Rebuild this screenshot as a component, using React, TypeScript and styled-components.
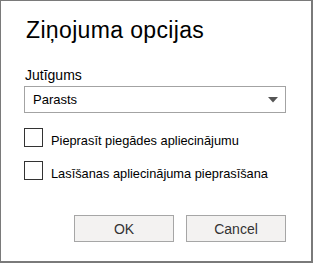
import React from "react";
import styled, { createGlobalStyle } from "styled-components";

const Global = createGlobalStyle`
  html, body { margin: 0; padding: 0; background: #ffffff; }
  * { box-sizing: border-box; }
`;

const Dialog = styled.div`
  width: 313px;
  height: 263px;
  border: 1px solid #7a7a7a;
  border-right-width: 2px;
  border-bottom-width: 2px;
  background: #ffffff;
  padding: 16px 25px 0 23px;
  display: flex;
  flex-direction: column;
  font-family: "Liberation Sans", Arial, sans-serif;
  color: #000;
`;

const Title = styled.h1`
  margin: 0 0 0 2px;
  font-size: 23px;
  letter-spacing: 0.35px;
  line-height: 26px;
  font-weight: 400;
`;

const FieldLabel = styled.div`
  margin: 24px 0 0 1px;
  font-size: 14px;
  line-height: 16px;
`;

const Select = styled.div`
  margin-top: 3px;
  height: 27px;
  width: 262px;
  border: 1px solid #a3a3a3;
  background: #fff;
  display: flex;
  align-items: center;
  justify-content: space-between;
  padding: 0 7px 0 8px;
  font-size: 13px;
`;

const Arrow = styled.svg`
  width: 10px;
  height: 6px;
  display: block;
`;

const Checks = styled.div`
  margin-top: 15px;
  display: flex;
  flex-direction: column;
  gap: 11px;
`;

const CheckRow = styled.label`
  display: flex;
  align-items: flex-start;
  gap: 8px;
  font-size: 12.8px;
`;

const Box = styled.span`
  width: 19px;
  height: 19px;
  border: 1px solid #333;
  background: #fff;
  flex: none;
`;

const CheckText = styled.span`
  line-height: 19px;
  padding-top: 3px;
`;

const Buttons = styled.div`
  margin-top: 32px;
  display: flex;
  justify-content: flex-end;
  gap: 12px;
`;

const Button = styled.button`
  width: 100px;
  height: 27px;
  border: 1px solid #a6a6a6;
  background: #f3f2f1;
  font-family: "Liberation Sans", Arial, sans-serif;
  font-size: 14px;
  color: #333;
  padding: 0;
`;

export default function App() {
  return (
    <>
      <Global />
      <Dialog>
        <Title>Ziņojuma opcijas</Title>
        <FieldLabel>Jutīgums</FieldLabel>
        <Select>
          <span>Parasts</span>
          <Arrow viewBox="0 0 10 6">
            <path d="M0 0 H10 L5 5.5 Z" fill="#555" />
          </Arrow>
        </Select>
        <Checks>
          <CheckRow>
            <Box />
            <CheckText>Pieprasīt piegādes apliecinājumu</CheckText>
          </CheckRow>
          <CheckRow>
            <Box />
            <CheckText>Lasīšanas apliecinājuma pieprasīšana</CheckText>
          </CheckRow>
        </Checks>
        <Buttons>
          <Button>OK</Button>
          <Button>Cancel</Button>
        </Buttons>
      </Dialog>
    </>
  );
}
